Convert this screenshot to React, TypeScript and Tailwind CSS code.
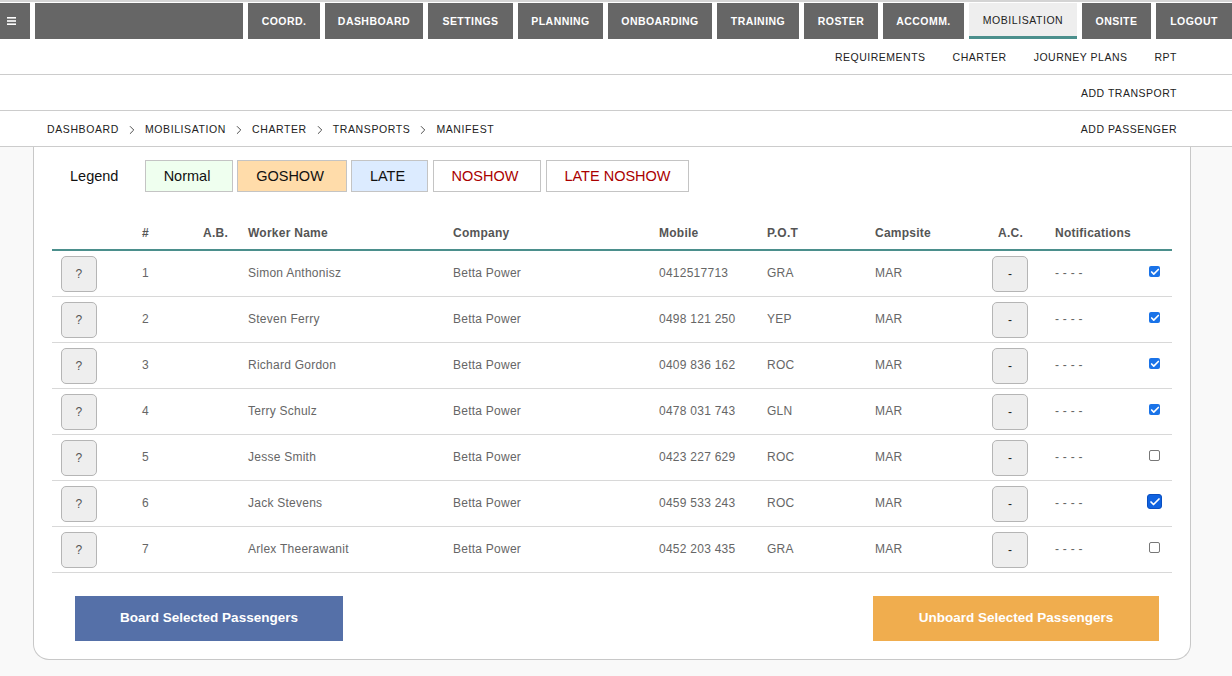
import { Check, ChevronRight } from 'lucide-react';

const tabs = [
  { label: 'COORD.', w: 'w-[72px]' },
  { label: 'DASHBOARD', w: 'w-[98px]' },
  { label: 'SETTINGS', w: 'w-[85px]' },
  { label: 'PLANNING', w: 'w-[85px]' },
  { label: 'ONBOARDING', w: 'w-[104px]' },
  { label: 'TRAINING', w: 'w-[82px]' },
  { label: 'ROSTER', w: 'w-[74px]' },
  { label: 'ACCOMM.', w: 'w-[81px]' },
];

const passengers = [
  { name: 'Simon Anthonisz', mobile: '0412517713', pot: 'GRA', checked: true },
  { name: 'Steven Ferry', mobile: '0498 121 250', pot: 'YEP', checked: true },
  { name: 'Richard Gordon', mobile: '0409 836 162', pot: 'ROC', checked: true },
  { name: 'Terry Schulz', mobile: '0478 031 743', pot: 'GLN', checked: true },
  { name: 'Jesse Smith', mobile: '0423 227 629', pot: 'ROC', checked: false },
  { name: 'Jack Stevens', mobile: '0459 533 243', pot: 'ROC', checked: true, focused: true },
  { name: 'Arlex Theerawanit', mobile: '0452 203 435', pot: 'GRA', checked: false },
];

const crumbs = ['DASHBOARD', 'MOBILISATION', 'CHARTER', 'TRANSPORTS', 'MANIFEST'];

function Tab({ label, w }: { label: string; w: string }) {
  return (
    <div className={`${w} h-full shrink-0 bg-[#666666] text-white flex items-center justify-center pt-0.5 text-[10.5px] font-bold tracking-[0.45px]`}>
      {label}
    </div>
  );
}

function SquareButton({ label, dark }: { label: string; dark?: boolean }) {
  return (
    <button className={`w-9 h-9 mt-[2px] bg-[#eeeeee] border border-[#b5b5b5] rounded-[5px] text-[12px] flex items-center justify-center ${dark ? 'text-[#222222]' : 'text-[#555555]'}`}>
      {label}
    </button>
  );
}

function Checkbox({ checked, focused }: { checked: boolean; focused?: boolean }) {
  if (focused) {
    return (
      <span className="w-[15px] h-[15px] rounded-[3px] bg-[#0f62e0] border border-[#0a4fc0] flex items-center justify-center">
        <Check className="w-3 h-3 text-white" strokeWidth={3.5} />
      </span>
    );
  }
  if (checked) {
    return (
      <span className="w-[11px] h-[11px] rounded-[2px] bg-[#1a73e8] flex items-center justify-center">
        <Check className="w-[10px] h-[10px] text-white" strokeWidth={4} />
      </span>
    );
  }
  return <span className="w-[11px] h-[11px] rounded-[2px] bg-white border border-[#777777]" />;
}

const th = 'p-0 pl-[9px] pt-[3px] text-left font-bold text-[12px] tracking-[0.25px] text-[#555555]';
const td = 'p-0 pl-[9px] text-[12px] tracking-[0.25px] text-[#666666] align-middle';
const subText = 'text-[10.5px] tracking-[0.5px] text-[#222222]';

export default function App() {
  return (
    <div className="w-[1232px] h-[676px] overflow-hidden bg-[#f9f9f9] font-['Liberation_Sans',Arial,sans-serif]">
      {/* Top nav */}
      <div className="bg-white border-t-2 border-[#d4d4d4] pt-px h-[39px]">
        <div className="flex h-9 gap-[5px]">
          <div className="w-[30px] h-full shrink-0 bg-[#666666] flex items-center justify-center pr-[8px]">
            <svg width="9" height="8" viewBox="0 0 9 8" fill="#ffffff">
              <rect x="0" y="0" width="9" height="1.6" />
              <rect x="0" y="3.2" width="9" height="1.6" />
              <rect x="0" y="6.4" width="9" height="1.6" />
            </svg>
          </div>
          <div className="w-[208px] h-full shrink-0 bg-[#666666]" />
          {tabs.map((t) => (
            <Tab key={t.label} label={t.label} w={t.w} />
          ))}
          <div className="w-[108px] h-full shrink-0 bg-[#eeeeee] border-b-[3px] border-[#4b8f8c] text-[#222222] flex items-center justify-center pt-0.5 text-[10.5px] tracking-[0.55px]">
            MOBILISATION
          </div>
          <Tab label="ONSITE" w="w-[69px]" />
          <Tab label="LOGOUT" w="w-[76px]" />
        </div>
      </div>

      {/* Sub nav */}
      <div className={`h-9 pt-0.5 bg-white border-b border-[#cccccc] flex items-center justify-end gap-[27px] pr-[55px] ${subText}`}>
        <span>REQUIREMENTS</span>
        <span>CHARTER</span>
        <span>JOURNEY PLANS</span>
        <span>RPT</span>
      </div>
      <div className={`h-9 pt-0.5 bg-white border-b border-[#cccccc] flex items-center justify-end pr-[55px] ${subText}`}>
        ADD TRANSPORT
      </div>
      <div className={`h-9 pt-0.5 bg-white border-b border-[#cccccc] flex items-center justify-between pl-[47px] pr-[55px] ${subText}`}>
        <div className="flex items-center tracking-[0.6px]">
          {crumbs.map((c, i) => (
            <span key={c} className="flex items-center">
              {i > 0 && <ChevronRight className="w-[14px] h-[14px] mx-[6px] text-[#333333]" strokeWidth={1.5} />}
              {c}
            </span>
          ))}
        </div>
        <span>ADD PASSENGER</span>
      </div>

      {/* Card */}
      <div className="ml-[33px] w-[1158px] h-[513px] bg-white border border-t-0 border-[#c8c8c8] rounded-b-[16px] px-[18px] pt-[13px]">
        <div className="flex items-center h-[32px] text-[14.5px]">
          <span className="ml-[18px] w-[75px] pt-px text-[#111111]">Legend</span>
          <div className="w-[88px] h-full pt-px pr-1 bg-[#efffef] border border-[#c4c4c4] flex items-center justify-center text-[#111111]">Normal</div>
          <div className="ml-[4px] w-[110px] h-full pt-px pr-1 bg-[#ffdcaa] border border-[#c4c4c4] flex items-center justify-center text-[#111111]">GOSHOW</div>
          <div className="ml-[4px] w-[77px] h-full pt-px pr-1 bg-[#dcebff] border border-[#c4c4c4] flex items-center justify-center text-[#111111]">LATE</div>
          <div className="ml-[5px] w-[108px] h-full pt-px pr-1 bg-white border border-[#c4c4c4] flex items-center justify-center text-[#aa0000]">NOSHOW</div>
          <div className="ml-[5px] w-[143px] h-full pt-px bg-white border border-[#c4c4c4] flex items-center justify-center text-[#aa0000]">LATE NOSHOW</div>
        </div>

        <table className="w-[1120px] mt-[21px] table-fixed border-collapse">
          <colgroup>
            <col className="w-[81px]" />
            <col className="w-[61px]" />
            <col className="w-[45px]" />
            <col className="w-[205px]" />
            <col className="w-[206px]" />
            <col className="w-[108px]" />
            <col className="w-[108px]" />
            <col className="w-[117px]" />
            <col className="w-[63px]" />
            <col className="w-[94px]" />
            <col className="w-[32px]" />
          </colgroup>
          <thead>
            <tr className="h-[37px] border-b-2 border-[#4b8f8c]">
              <th className={th}></th>
              <th className={th}>#</th>
              <th className={th}>A.B.</th>
              <th className={th}>Worker Name</th>
              <th className={th}>Company</th>
              <th className={th}>Mobile</th>
              <th className={th}>P.O.T</th>
              <th className={th}>Campsite</th>
              <th className={th}><span className="ml-[6px]">A.C.</span></th>
              <th className={th}>Notifications</th>
              <th className={th}></th>
            </tr>
          </thead>
          <tbody>
            {passengers.map((p, i) => (
              <tr key={p.name} className="h-[46px] border-b border-[#d8d8d8]">
                <td className={td}><SquareButton label="?" /></td>
                <td className={td}>{i + 1}</td>
                <td className={td}></td>
                <td className={td}>{p.name}</td>
                <td className={td}>Betta Power</td>
                <td className={td}>{p.mobile}</td>
                <td className={td}>{p.pot}</td>
                <td className={td}>MAR</td>
                <td className={td}><SquareButton label="-" dark /></td>
                <td className={td}>- - - -</td>
                <td className="p-0">
                  <div className="w-[15px] h-[15px] ml-[7px] mb-[3px] flex items-center justify-center">
                    <Checkbox checked={p.checked} focused={p.focused} />
                  </div>
                </td>
              </tr>
            ))}
          </tbody>
        </table>

        <div className="flex justify-between mt-[23px] pl-[23px] pr-[13px]">
          <button className="w-[268px] h-[45px] bg-[#5570a8] text-white text-[13.5px] font-bold">Board Selected Passengers</button>
          <button className="w-[286px] h-[45px] bg-[#f0ad4e] text-white text-[13.5px] font-bold">Unboard Selected Passengers</button>
        </div>
      </div>
    </div>
  );
}
